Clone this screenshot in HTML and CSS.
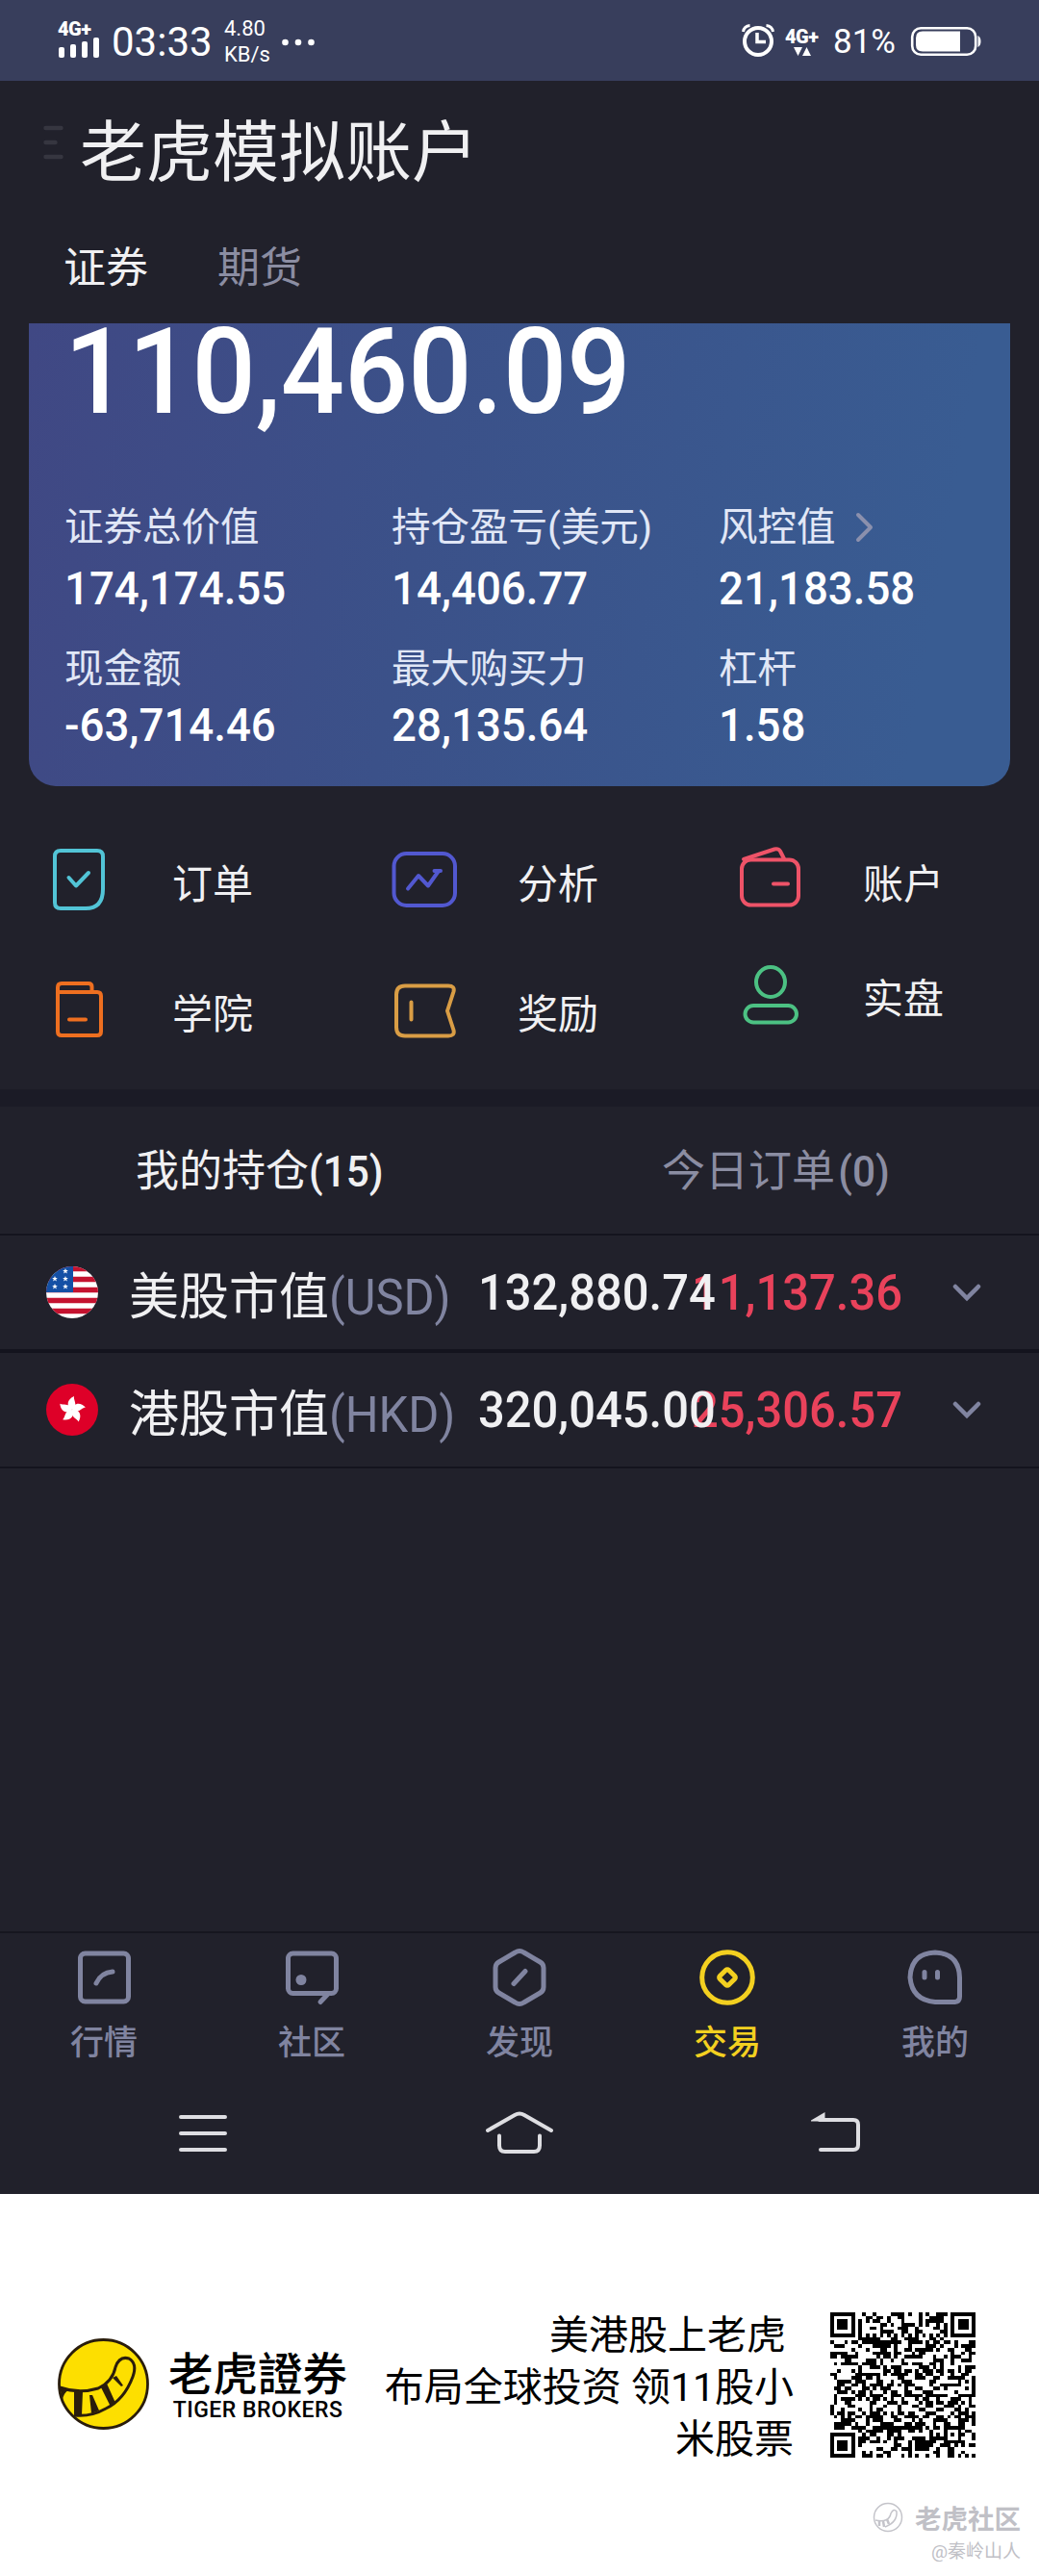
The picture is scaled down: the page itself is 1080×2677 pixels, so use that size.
FILE: index.html
```html
<!DOCTYPE html>
<html lang="zh-CN">
<head>
<meta charset="utf-8">
<title>老虎模拟账户</title>
<link rel="stylesheet" href="styles.css">
</head>
<body>
<div class="app">
  <header class="status">
    <div class="signal"><b class="net">4G+</b>
      <svg width="44" height="21" viewBox="0 0 44 21" fill="#fff"><rect x="1" y="10" width="6" height="11" rx="2"/><rect x="13" y="7" width="6" height="14" rx="2"/><rect x="25" y="4" width="6" height="17" rx="2"/><rect x="37" y="0" width="6" height="21" rx="2"/></svg>
    </div>
    <span class="clock">03:33</span>
    <span class="speed">4.80<br>KB/s</span>
    <svg class="more" width="34" height="8" viewBox="0 0 34 8" fill="#fff"><circle cx="3.5" cy="4" r="3.3"/><circle cx="17" cy="4" r="3.3"/><circle cx="30.500" cy="4" r="3.3"/></svg>
    <span class="grow"></span>
    <svg width="36" height="36" viewBox="772 25 36 36" fill="none" stroke="#fff"><circle cx="790" cy="43" r="14" stroke-width="4"/><path d="M789 34v9.500h9" stroke-width="3.500"/><path d="M774.500 33q1-6 7-6.500M805.500 33q-1-6-7-6.500" stroke-width="3"/></svg>
    <div class="data"><b class="net">4G+</b>
      <svg width="18" height="9" viewBox="0 0 18 9" fill="#fff"><path d="M0 0h9L4.500 9zM9 9h9L13.500 0z"/></svg>
    </div>
    <span class="pct">81%</span>
    <svg width="74" height="32" viewBox="947 26 74 32"><rect x="949.200" y="28.200" width="66" height="27.600" rx="9" fill="none" stroke="#fff" stroke-width="2.600"/><path d="M999 31.500v21h-39q-7 0-7-7v-7q0-7 7-7z" fill="#fff"/><path d="M1017.500 36q3 1.500 3 6t-3 6z" fill="#fff"/></svg>
  </header>

  <h1 class="title">
    <svg width="21" height="36" viewBox="0 0 21 36" stroke="#363640" stroke-width="4.400" stroke-linecap="round"><path d="M2.500 3h16M2.500 18h10M2.500 33h16"/></svg>
    <span>老虎模拟账户</span>
  </h1>
  <nav class="kinds"><span class="on">证券</span><span>期货</span></nav>

  <section class="card">
    <div class="total"><span class="num">110,460.09</span></div>
    <dl class="stats">
      <div><dt>证券总价值</dt><dd class="num">174,174.55</dd></div>
      <div><dt>持仓盈亏<i class="par">(</i>美元<i class="par">)</i></dt><dd class="num">14,406.77</dd></div>
      <div><dt>风控值<svg class="go" width="20" height="32" viewBox="0 0 20 32" fill="none" stroke="#8b90ad" stroke-width="4" stroke-linecap="round" stroke-linejoin="round"><path d="M3 3l13 13L3 29"/></svg></dt><dd class="num">21,183.58</dd></div>
      <div><dt>现金额</dt><dd class="num">-63,714.46</dd></div>
      <div><dt>最大购买力</dt><dd class="num">28,135.64</dd></div>
      <div><dt>杠杆</dt><dd class="num">1.58</dd></div>
    </dl>
  </section>

  <section class="menu">
    <a><svg width="70" height="76" viewBox="48 877 70 76" stroke="#52c4d6"><path d="M63 884h38q6 0 6 6v34q0 20-18 20H63q-6 0-6-6v-48q0-6 6-6z"/><path d="M71.500 912l7.500 8.500L92 907"/></svg>订单</a>
    <a><svg width="70" height="76" viewBox="406 877 70 76" stroke="#5258d0"><rect x="409.500" y="887" width="63.500" height="54" rx="13"/><path d="M424 923.500l11-13.500 10 10.500 11-15.500M451.500 905h6.500"/></svg>分析</a>
    <a><svg width="70" height="76" viewBox="766 877 70 76" stroke="#ee5368"><rect x="771" y="893.500" width="59" height="47" rx="9.500"/><path d="M804 918.500h15M773 893l32-10.500q4-1 6 2l4 8"/></svg>账户</a>
    <a><svg width="70" height="76" viewBox="48 1012 70 76" stroke="#ee6f20"><path d="M60 1031h41q4 0 4 4v37q0 4-4 4H64q-4 0-4-4zM60 1031v-5q0-4 4-4h28q3.500 0 3.500 3.500v5.500M72 1059.500h17"/></svg>学院</a>
    <a><svg width="70" height="76" viewBox="406 1012 70 76" stroke="#d99d45"><path d="M421 1024.500h45q7 0 5.500 6l-6.500 20 6.500 20q1.500 6-5.500 6h-45q-9 0-9-9v-34q0-9 9-9zM427.500 1041.500v18"/></svg>奖励</a>
    <a class="real"><svg width="70" height="76" viewBox="766 996 70 76" stroke="#4cc183"><ellipse cx="801" cy="1020.500" rx="15" ry="15.500"/><rect x="774.500" y="1045" width="53.500" height="17.500" rx="8.700"/></svg>实盘</a>
  </section>

  <section class="book">
    <div class="tabs"><span class="on">我的持仓<i class="par num">(15)</i></span><span>今日订单<i class="par num">(0)</i></span></div>
    <div class="row">
      <svg class="flag" width="54" height="54" viewBox="0 0 54 54"><defs><clipPath id="disc"><circle cx="27" cy="27" r="27"/></clipPath><path id="star" d="M0-3l.8 2h2.100L1.200.300l.7 2.200L0 1.200l-1.900 1.300.7-2.200L-2.900-1h2.100z"/></defs><g clip-path="url(#disc)"><path fill="#fff" d="M0 0h54v54H0z"/><path d="M0 2.500h54M0 13.500h54M0 24.500h54M0 35.500h54M0 46.500h54" stroke="#c4122f" stroke-width="5.500"/><path fill="#1450a5" d="M0 0h28v27H0z"/><g fill="#fff"><use href="#star" x="20" y="5"/><use href="#star" x="9" y="13"/><use href="#star" x="20" y="13"/><use href="#star" x="9" y="21"/><use href="#star" x="20" y="21"/></g></g></svg>
      <span class="name">美股市值<i class="num">(USD)</i></span><span class="num value">132,880.74</span><span class="num gain">11,137.36</span>
      <svg class="open" width="30" height="20" viewBox="0 0 30 20"><path d="M3 4l12 12L27 4"/></svg>
    </div>
    <div class="row">
      <svg class="flag" width="54" height="54" viewBox="-27 -27 54 54"><defs><path id="petal" d="M0 0C-7-4-5-11 2-14C1-10 6-6 1-1z"/></defs><circle r="27" fill="#de0028"/><g fill="#fff"><use href="#petal"/><use href="#petal" transform="rotate(72)"/><use href="#petal" transform="rotate(144)"/><use href="#petal" transform="rotate(216)"/><use href="#petal" transform="rotate(288)"/></g></svg>
      <span class="name">港股市值<i class="num">(HKD)</i></span><span class="num value">320,045.00</span><span class="num gain">25,306.57</span>
      <svg class="open" width="30" height="20" viewBox="0 0 30 20"><path d="M3 4l12 12L27 4"/></svg>
    </div>
  </section>

  <nav class="bottom">
    <a><svg width="66" height="66" viewBox="75 2021 66 66"><rect x="83.500" y="2029" width="50" height="50" rx="5"/><path d="M100 2060q5-11 17-12"/></svg>行情</a>
    <a><svg width="66" height="66" viewBox="291 2021 66 66"><rect x="299.500" y="2029" width="50" height="41.500" rx="5"/><path d="M341 2071l-8 8.500"/><circle cx="313" cy="2056.500" r="5.500" fill="#8084a0" stroke="none"/></svg>社区</a>
    <a><svg width="66" height="66" viewBox="507 2021 66 66"><path d="M535.500 2028q4.500-3 9 0l17 10q3.500 2 3.500 6v20q0 4-3.500 6l-17 10q-4.500 3-9 0l-17-10q-3.500-2-3.500-6v-20q0-4 3.500-6zM534 2060.500l12-13"/></svg>发现</a>
    <a class="on"><svg width="66" height="66" viewBox="723 2021 66 66"><circle cx="756" cy="2054" r="26.300"/><rect x="749.500" y="2047.500" width="13" height="13" rx="2" transform="rotate(45 756 2054)"/></svg>交易</a>
    <a><svg width="66" height="66" viewBox="939 2021 66 66"><path d="M972 2028q25 1 25.500 26v20q0 5-5 5.500H972q-24-2-26-25.500 1-25 26-26z"/><path d="M961 2048.500v5.500M974.500 2048.500v5.500"/></svg>我的</a>
  </nav>
  <div class="keys">
    <svg width="56" height="50" viewBox="183 2191 56 50"><path d="M188 2200h46M188 2217h46M188 2234h46"/></svg>
    <svg width="76" height="50" viewBox="503 2191 76 50"><path d="M508 2214l28-16q5-3 10 0l28 16M520 2219.500v10q0 6.500 6 6.500h30q6 0 6-6.500v-10"/></svg>
    <svg width="56" height="50" viewBox="841 2191 56 50"><path d="M852 2203h35q5 0 5 5v21q0 5-5 5h-34"/><path d="M843 2203.500l14.500-8.500v9.500H843z" fill="#dedee2" stroke="none"/></svg>
  </div>
</div>

<footer class="promo">
  <svg class="logo" width="96" height="96" viewBox="60 2430 96 96"><circle cx="107.500" cy="2477.500" r="46" fill="#fddf00" stroke="#2a1d0c" stroke-width="2.800"/><path d="M62 2481Q82 2488 102 2482Q117 2475 120 2460Q124 2448 134 2451Q143 2456 138 2470Q129 2494 110 2503Q94 2512 77 2510" fill="none" stroke="#2a1d0c" stroke-width="3"/><g fill="#2a1d0c"><path d="M62 2480l9 4q-5 3-6 10zM77 2485l9 0-1 25-8-1zM93 2489h3l7 16-8 3zM105 2481l6-4 9 20-5 4zM117 2471l4-2 7 10-2 1z"/></g></svg>
  <div class="brand"><strong>老虎證券</strong><span>TIGER BROKERS</span></div>
  <p class="slogan"><span class="lead">美港股上老虎</span><br>布局全球投资 领11股小<br>米股票</p>
  <svg class="qr" width="151" height="151" viewBox="0 0 41 41" shape-rendering="crispEdges"></svg>
</footer>
<div class="mark">
  <div><svg width="32" height="32" viewBox="0 0 32 32" fill="none" stroke="#c4c4ca"><circle cx="16" cy="16" r="14.500" stroke-width="1.500"/><path d="M3 19q14 3 16-7 3-6 6-2 1 11-12 16" stroke-width="1.500"/><path d="M7 20v5M11 20l1 6M15 18l2 5" stroke-width="2.500"/></svg><b>老虎社区</b></div>
  <small>@秦岭山人</small>
</div>
<script src="qr.js"></script>
</body>
</html>
```
FILE: styles.css
```css
* { box-sizing: border-box; }
body { margin: 0; width: 1080px; height: 2677px; background: #fff; color: #f0f0f2; font-family: Roboto, "Noto Sans CJK SC", sans-serif; overflow: hidden; }
i { font-style: normal; }
svg { display: block; flex: none; }
.app { height: 2280px; background: #21212b; display: flex; flex-direction: column; }
.num { display: inline-block; transform: scaleX(.94); transform-origin: left; font-weight: 500; white-space: nowrap; }

.status { height: 84px; background: #383e5c; color: #fff; display: flex; align-items: center; padding: 2px 60px 0 60px; }
.net { display: block; font: 900 20px/18px Roboto, sans-serif; letter-spacing: -.5px; }
.signal { width: 44px; margin-top: -6px; }
.clock { font-size: 42px; margin-left: 12px; width: 107px; letter-spacing: 0; }
.speed { font-size: 22px; line-height: 27px; margin-left: 10px; width: 60px; }
.more { margin-top: 2px; }
.grow { flex: 1; }
.data { width: 38px; margin-left: 10px; }
.data svg { margin: 2px 0 0 9px; }
.pct { font-size: 35px; width: 70px; margin: 0 10px 0 12px; }

.title { margin: 0; height: 131px; padding: 6px 0 0 45px; display: flex; align-items: center; gap: 17px; font-size: 69px; font-weight: 400; }
.title svg { margin-top: -9px; }
.kinds { height: 121px; padding: 42px 0 0 66px; display: flex; gap: 72px; font-size: 44px; line-height: 44px; color: #8b8da2; }
.kinds .on { color: #f0f0f2; }

.card { margin: 0 30px; height: 481px; padding: 0 0 0 37px; border-radius: 0 0 28px 28px; background: linear-gradient(100deg, #404884, #3b5189 40%, #395c92 90%); }
.total { height: 178px; font-size: 124px; line-height: 101px; color: #fff; }
.stats { margin: 0; display: grid; grid-template-columns: 340px 340px 1fr; grid-template-rows: 147px 140px; }
dt { display: flex; align-items: center; font-size: 40.500px; line-height: 68px; color: #e1e7f6; }
dd { margin: 0; font-size: 48.500px; line-height: 60px; color: #fff; }
.stats > :nth-child(n+4) dd { margin-top: -5px; }
.go { margin-left: 20px; }

.menu { height: 315px; padding: 60px 0 0 48px; display: grid; grid-template-columns: 358px 360px 1fr; grid-template-rows: 135px 135px; align-items: start; }
.menu a { display: flex; align-items: center; gap: 61px; font-size: 42px; }
.menu svg { fill: none; stroke-width: 4; stroke-linecap: round; stroke-linejoin: round; }
.menu a:nth-child(3n+2) { gap: 62px; }
.menu .real { margin-top: -16px; }

.book { border-top: 18px solid #1b1b26; }
.tabs { height: 134px; display: flex; border-bottom: 2px solid #14141e; font-size: 45px; line-height: 136px; color: #8b8da2; }
.tabs span { flex: 1; text-align: center; }
.tabs .on { color: #f0f0f2; }
.tabs .num { width: 64px; }
.tabs .on .num { width: 78px; }
.row { height: 120px; display: grid; grid-template-columns: 86px 363px 220px 221px 1fr; align-items: center; padding-left: 48px; border-bottom: 2px solid #14141e; font-size: 52px; }
.row + .row { border-top: 2px solid #14141e; height: 122px; }
.name i { color: #8084a0; font-weight: 400; }
.value { position: relative; z-index: 1; }
.gain { color: #e9425b; justify-self: end; transform-origin: right; }
.open { margin-left: 52px; fill: none; stroke: #8084a0; stroke-width: 4.500; stroke-linecap: round; }

.bottom { margin-top: auto; height: 154px; border-top: 2px solid #16161f; display: grid; grid-template-columns: repeat(5, 1fr); padding-top: 13px; color: #8084a0; }
.bottom a { display: flex; flex-direction: column; align-items: center; font-size: 35px; font-weight: 500; line-height: 72px; }
.bottom svg { fill: none; stroke: currentColor; stroke-width: 5; stroke-linecap: round; stroke-linejoin: round; }
.bottom .on { color: #f3d020; }
.keys { height: 119px; padding: 30px 183px 0; display: flex; justify-content: space-between; }
.keys svg { fill: none; stroke: #dedee2; stroke-width: 4; stroke-linecap: round; }

.promo { height: 320px; display: flex; align-items: flex-start; padding: 0 66px 0 60px; color: #000; }
.logo { margin-top: 150px; }
.brand { width: 190px; margin: 156px 0 0 17px; display: flex; flex-direction: column; align-items: center; }
.brand strong { font: 500 46.500px/56px "Noto Sans CJK TC", sans-serif; }
.brand span { font-size: 23px; font-weight: 500; line-height: 28px; margin-top: -1px; letter-spacing: .5px; white-space: nowrap; }
.slogan { flex: 1; margin: 120px 38px 0 0; text-align: right; font-size: 41px; line-height: 54px; white-space: nowrap; }
.lead { margin-right: 8px; }
.qr { margin-top: 123px; }
.mark { padding-right: 19px; display: flex; flex-direction: column; align-items: flex-end; color: #c0c0c6; }
.mark div { display: flex; align-items: center; gap: 12px; height: 32px; }
.mark b { font-size: 27.500px; }
.mark small { font-size: 19px; line-height: 24px; margin-top: 8px; }
```
FILE: qr.js
```js
const ns = "http://www.w3.org/2000/svg";
const n = 41;
let seed = 7;
const next = () => (seed = (seed * 1103515245 + 12345) % 2147483648) / 2147483648;
const ring = (x, y, cx, cy) => Math.max(Math.abs(x - cx), Math.abs(y - cy));
let d = "";
for (let y = 0; y < n; y++) {
  for (let x = 0; x < n; x++) {
    let dark = next() > 0.5;
    if (x === 6 || y === 6) dark = (x + y) % 2 === 0;
    for (const [cx, cy] of [[3, 3], [37, 3], [3, 37]]) {
      const r = ring(x, y, cx, cy);
      if (r <= 4) dark = r !== 2 && r !== 4;
    }
    const a = ring(x, y, 34, 34);
    if (a <= 2) dark = a !== 1;
    if (dark) d += `M${x} ${y}h1v1h-1z`;
  }
}
const path = document.createElementNS(ns, "path");
path.setAttribute("d", d);
document.querySelector(".qr").append(path);
```
